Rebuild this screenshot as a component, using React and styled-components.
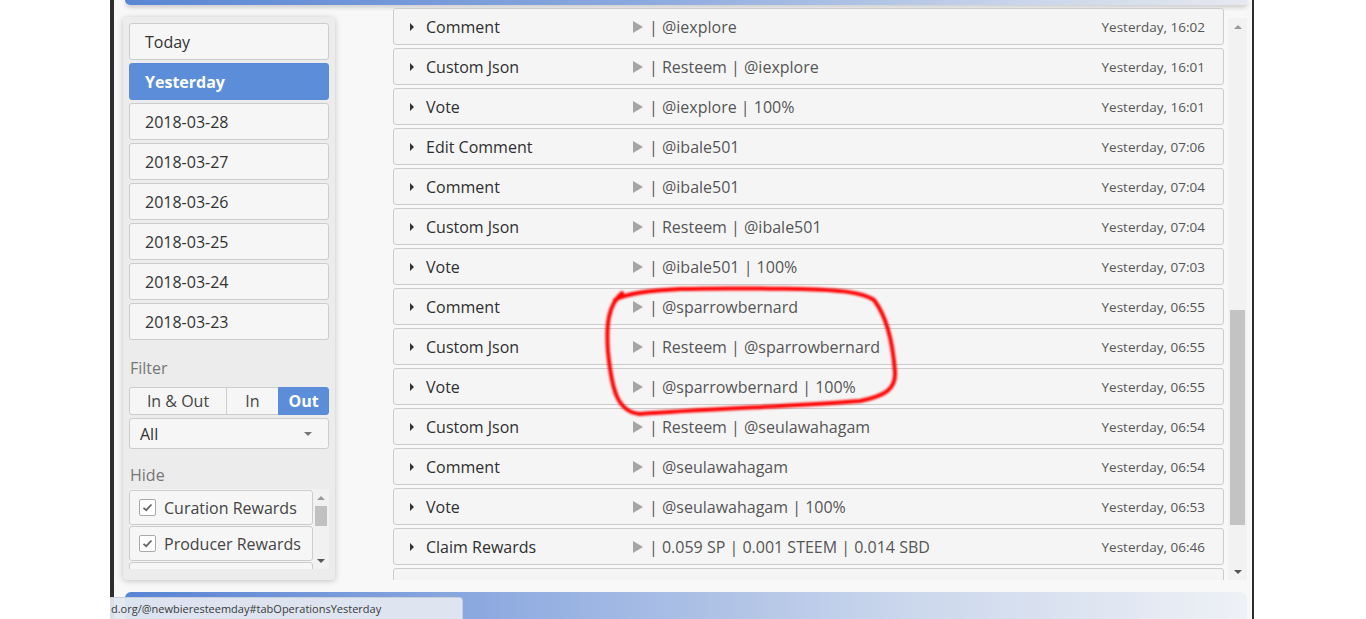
import React from 'react';
import styled, { createGlobalStyle } from 'styled-components';

const GlobalStyle = createGlobalStyle`
  html, body {
    margin: 0;
    padding: 0;
    background: #ffffff;
    overflow: hidden;
  }
  * {
    box-sizing: border-box;
  }
`;

const Page = styled.div`
  position: relative;
  height: 619px;
  padding-left: 110px;
  display: flex;
  font-family: 'Open Sans', 'Liberation Sans', sans-serif;
  color: #333;
`;

const Window = styled.div`
  width: 1144px;
  height: 100%;
  border-left: 4px solid #2e2e2e;
  border-right: 2px solid #2e2e2e;
  background: #f8f8f8;
  display: flex;
  flex-direction: column;
`;

const TopBar = styled.div`
  height: 5px;
  margin: 0 4px 0 11px;
  border-radius: 0 0 6px 6px;
  background: linear-gradient(90deg, #5a86d4 0%, #8aa8de 45%, #c9d5ea 80%, #e6e9ef 100%);
  box-shadow: 0 2px 5px rgba(0, 0, 0, 0.22);
`;

const Body = styled.div`
  flex: 1;
  display: flex;
  min-height: 0;
  padding-left: 9px;
`;

const Sidebar = styled.aside`
  width: 212px;
  margin-top: 12px;
  padding: 6px;
  background: #ececec;
  border-radius: 4px;
  box-shadow: 0 1px 6px rgba(0, 0, 0, 0.22);
  display: flex;
  flex-direction: column;
`;

const DateItem = styled.div`
  height: 37px;
  margin-bottom: 3px;
  padding-left: 15px;
  display: flex;
  align-items: center;
  font-size: 16px;
  border-radius: 3px;
  border: 1px solid ${(p) => (p.$active ? '#5a8bd6' : '#cccccc')};
  background: ${(p) => (p.$active ? '#5b8dd8' : '#f6f6f6')};
  color: ${(p) => (p.$active ? '#ffffff' : '#333')};
  font-weight: ${(p) => (p.$active ? 700 : 400)};
`;

const SideLabel = styled.div`
  margin-top: ${(p) => p.$top}px;
  margin-bottom: ${(p) => p.$bottom}px;
  padding-left: 1px;
  font-size: 16px;
  line-height: 22px;
  color: #777;
`;

const ToggleGroup = styled.div`
  display: flex;
  height: 28px;
`;

const Toggle = styled.div`
  width: ${(p) => p.$w}px;
  display: flex;
  align-items: center;
  justify-content: center;
  font-size: 16px;
  border: 1px solid ${(p) => (p.$active ? '#5a8bd6' : '#cccccc')};
  margin-right: -1px;
  background: ${(p) => (p.$active ? '#5b8dd8' : '#f6f6f6')};
  color: ${(p) => (p.$active ? '#ffffff' : '#444')};
  font-weight: ${(p) => (p.$active ? 700 : 400)};
  border-radius: ${(p) => p.$radius};
`;

const Select = styled.div`
  margin-top: 3px;
  height: 31px;
  padding: 0 16px 0 10px;
  display: flex;
  align-items: center;
  justify-content: space-between;
  font-size: 16px;
  color: #333;
  background: #f6f6f6;
  border: 1px solid #cccccc;
  border-radius: 3px;
`;

const SelectCaret = styled.span`
  width: 0;
  height: 0;
  border-left: 4px solid transparent;
  border-right: 4px solid transparent;
  border-top: 4px solid #777;
`;

const HideBox = styled.div`
  height: 80px;
  display: flex;
  overflow: hidden;
  background: #f3f3f3;
`;

const HideItems = styled.div`
  flex: 1;
  display: flex;
  flex-direction: column;
`;

const HideItem = styled.div`
  height: 35px;
  flex-shrink: 0;
  margin-top: 1px;
  display: flex;
  align-items: center;
  padding-left: 9px;
  gap: 8px;
  font-size: 16px;
  color: #444;
  background: #f6f6f6;
  border: 1px solid #cccccc;
  border-radius: 3px;
`;

const Check = styled.span`
  width: 17px;
  height: 17px;
  border: 1px solid #aaa;
  border-radius: 2px;
  background: #fff;
  display: flex;
  align-items: center;
  justify-content: center;
`;

const MiniScroll = styled.div`
  width: 16px;
  display: flex;
  flex-direction: column;
  align-items: center;
  background: #f1f1f1;
`;

const Arrow = styled.span`
  width: 0;
  height: 0;
  border-left: 4px solid transparent;
  border-right: 4px solid transparent;
  ${(p) => (p.$up ? 'border-bottom: 4px solid #999;' : 'border-top: 4px solid #555;')}
`;

const ArrowBtn = styled.div`
  height: ${(p) => p.$h}px;
  width: 100%;
  display: flex;
  align-items: center;
  justify-content: center;
`;

const MiniThumb = styled.div`
  width: 12px;
  height: 20px;
  background: #c1c1c1;
`;

const Spacer = styled.div`
  flex: 1;
`;

const ListWrap = styled.div`
  margin-left: 58px;
  display: flex;
`;

const ListViewport = styled.div`
  width: 831px;
  height: 575px;
  overflow: hidden;
  padding-top: 3px;
`;

const Row = styled.div`
  height: 37px;
  margin-bottom: 3px;
  display: grid;
  grid-template-columns: 32px 207px 1fr auto;
  align-items: center;
  background: #f5f5f5;
  border: 1px solid #cccccc;
  border-radius: 3px;
  padding-right: 18px;
`;

const Caret = styled.span`
  justify-self: end;
  margin-right: 12px;
  width: 0;
  height: 0;
  border-left: 4px solid #333;
  border-top: 4px solid transparent;
  border-bottom: 4px solid transparent;
`;

const OpName = styled.span`
  font-size: 16px;
  font-weight: 500;
  color: #2f2f2f;
  white-space: nowrap;
`;

const Detail = styled.span`
  display: flex;
  align-items: center;
  gap: 6px;
  font-size: 16px;
  color: #555;
  white-space: nowrap;
`;

const Play = styled.span`
  width: 0;
  height: 0;
  border-left: 10px solid #a5a5a5;
  border-top: 6px solid transparent;
  border-bottom: 6px solid transparent;
`;

const Time = styled.span`
  font-size: 13.5px;
  color: #555;
  white-space: nowrap;
`;

const Scrollbar = styled.div`
  margin: 13px 0 0 4px;
  width: 19px;
  height: 562px;
  display: flex;
  flex-direction: column;
  align-items: center;
  background: #f2f2f2;
`;

const Thumb = styled.div`
  margin-top: ${(p) => p.$top}px;
  width: 15px;
  height: ${(p) => p.$h}px;
  background: #c3c3c3;
`;

const BottomBar = styled.div`
  height: 27px;
  margin: 12px 5px 0 11px;
  border-radius: 6px 6px 0 0;
  background: linear-gradient(90deg, #5884d4 0%, #9ab3e2 40%, #cbd7ec 70%, #eef1f6 100%);
`;

const StatusBar = styled.div`
  position: absolute;
  left: 110px;
  bottom: 0;
  width: 353px;
  height: 22px;
  display: flex;
  align-items: center;
  overflow: hidden;
  padding-left: 1px;
  font-size: 11px;
  color: #3a3a3a;
  background: rgba(226, 231, 240, 0.96);
  border: 1px solid #c8cfdc;
  border-left: none;
  border-bottom: none;
  border-radius: 0 4px 0 0;
`;

const StatusText = styled.span`
  white-space: nowrap;
`;

const Scribble = styled.svg`
  position: absolute;
  left: 0;
  top: 0;
  pointer-events: none;
`;

const dates = ['Today', 'Yesterday', '2018-03-28', '2018-03-27', '2018-03-26', '2018-03-25', '2018-03-24', '2018-03-23'];

const ops = [
  ['Comment', '@iexplore', '16:02'],
  ['Custom Json', 'Resteem | @iexplore', '16:01'],
  ['Vote', '@iexplore | 100%', '16:01'],
  ['Edit Comment', '@ibale501', '07:06'],
  ['Comment', '@ibale501', '07:04'],
  ['Custom Json', 'Resteem | @ibale501', '07:04'],
  ['Vote', '@ibale501 | 100%', '07:03'],
  ['Comment', '@sparrowbernard', '06:55'],
  ['Custom Json', 'Resteem | @sparrowbernard', '06:55'],
  ['Vote', '@sparrowbernard | 100%', '06:55'],
  ['Custom Json', 'Resteem | @seulawahagam', '06:54'],
  ['Comment', '@seulawahagam', '06:54'],
  ['Vote', '@seulawahagam | 100%', '06:53'],
  ['Claim Rewards', '0.059 SP | 0.001 STEEM | 0.014 SBD', '06:46'],
];

const CheckMark = () => (
  <svg width="11" height="9" viewBox="0 0 11 9">
    <path d="M1.5 4.8 L4.2 7.2 L9.5 1.5" fill="none" stroke="#666" strokeWidth="1.8" />
  </svg>
);

export default function App() {
  return (
    <>
      <GlobalStyle />
      <Page>
        <Window>
          <TopBar />
          <Body>
            <Sidebar>
              {dates.map((d) => (
                <DateItem key={d} $active={d === 'Yesterday'}>{d}</DateItem>
              ))}
              <SideLabel $top={14} $bottom={8}>Filter</SideLabel>
              <ToggleGroup>
                <Toggle $w={98} $radius="3px 0 0 3px">In &amp; Out</Toggle>
                <Toggle $w={53}>In</Toggle>
                <Toggle $w={51} $active $radius="0 3px 3px 0">Out</Toggle>
              </ToggleGroup>
              <Select>
                All
                <SelectCaret />
              </Select>
              <SideLabel $top={15} $bottom={3}>Hide</SideLabel>
              <HideBox>
                <HideItems>
                  <HideItem><Check><CheckMark /></Check>Curation Rewards</HideItem>
                  <HideItem><Check><CheckMark /></Check>Producer Rewards</HideItem>
                  <HideItem><Check><CheckMark /></Check></HideItem>
                </HideItems>
                <MiniScroll>
                  <ArrowBtn $h={17}><Arrow $up /></ArrowBtn>
                  <MiniThumb />
                  <Spacer />
                  <ArrowBtn $h={16}><Arrow /></ArrowBtn>
                </MiniScroll>
              </HideBox>
            </Sidebar>
            <ListWrap>
              <ListViewport>
                {ops.map(([name, detail, time], i) => (
                  <Row key={i}>
                    <Caret />
                    <OpName>{name}</OpName>
                    <Detail><Play />| {detail}</Detail>
                    <Time>Yesterday, {time}</Time>
                  </Row>
                ))}
                <Row />
              </ListViewport>
              <Scrollbar>
                <ArrowBtn $h={18}><Arrow $up /></ArrowBtn>
                <Thumb $top={274} $h={215} />
                <Spacer />
                <ArrowBtn $h={17}><Arrow /></ArrowBtn>
              </Scrollbar>
            </ListWrap>
          </Body>
          <BottomBar />
        </Window>
        <StatusBar>
          <StatusText>d.org/@newbieresteemday#tabOperationsYesterday</StatusText>
        </StatusBar>
        <Scribble width="1366" height="619" viewBox="0 0 1366 619">
          <defs>
            <filter id="soft" x="-5%" y="-5%" width="110%" height="110%">
              <feGaussianBlur stdDeviation="0.9" />
            </filter>
          </defs>
          <path
            d="M615 300 C 640 286, 720 288, 800 289 C 840 290, 862 292, 874 300 C 888 318, 893 345, 895 372 C 896 390, 884 396, 860 401 C 800 406, 700 409, 640 414 C 618 412, 612 392, 608 352 C 606 325, 608 305, 622 293"
            fill="none"
            stroke="#ff0000"
            strokeWidth="4"
            strokeLinecap="round"
            filter="url(#soft)"
          />
        </Scribble>
      </Page>
    </>
  );
}
